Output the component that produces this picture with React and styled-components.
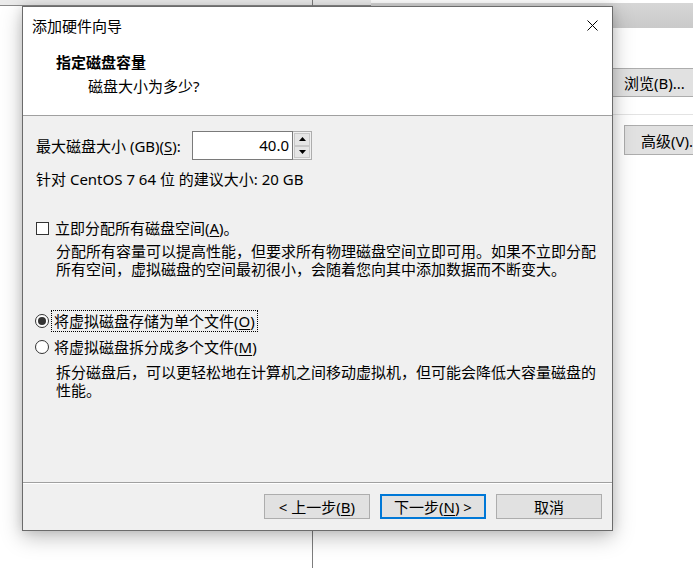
import React from 'react';
import styled, {createGlobalStyle} from 'styled-components';

const GlobalStyle = createGlobalStyle`
    html, body {
        margin: 0;
        padding: 0;
        background: #fff;
    }
    body {
        font-family: "Noto Sans", "Noto Sans CJK SC", sans-serif;
        font-size: 15px;
        color: #000;
    }
`;

// the window that sits behind the wizard
const Desktop = styled.div`
    position: relative;
    width: 693px;
    height: 568px;
    overflow: hidden;
    background: #fff;
`;

const BackWindow = styled.div`
    display: grid;
    grid-template-columns: 312px 1px 1fr;
    height: 100%;
`;

const Pane = styled.div`
    display: flex;
    flex-direction: column;
`;

const TopStrip = styled.div`
    height: 5px;
    width: ${props => props.width || 'auto'};
    flex-shrink: 0;
    background: #ebebeb;
    border-bottom: 1px solid #8a8a8a;
`;

const Divider = styled.div`
    background: #7d7d7d;
`;

const TopRow = styled.div`
    display: flex;
    height: 28px;
`;

const GrayBar = styled.div`
    flex: 1;
    margin-top: 3px;
    background: linear-gradient(#d6d6d6, #cacaca);
`;

const BackButton = styled.div`
    box-sizing: border-box;
    margin-top: ${props => props.top}px;
    margin-left: ${props => props.left}px;
    height: ${props => props.h}px;
    width: 120px;
    padding-left: ${props => props.pad}px;
    display: flex;
    align-items: center;
    background: #e1e1e1;
    border: 1px solid #adadad;
    white-space: nowrap;
`;

const HLine = styled.div`
    margin-top: 17px;
    height: 1px;
    background: #e3e3e3;
`;

// wizard dialog floating over the window
const Dialog = styled.div`
    position: absolute;
    left: 22px;
    top: 6px;
    width: 591px;
    height: 525px;
    box-sizing: border-box;
    border: 1px solid #6b6b6b;
    background: #f0f0f0;
    display: flex;
    flex-direction: column;
    box-shadow: 0 6px 20px rgba(0, 0, 0, 0.26), 0 0 10px rgba(0, 0, 0, 0.1);
`;

const TitleBar = styled.div`
    height: 37px;
    flex-shrink: 0;
    display: flex;
    align-items: center;
    justify-content: space-between;
    background: #fff;
    padding-left: 9px;
`;

const CloseButton = styled.div`
    width: 40px;
    height: 37px;
    display: flex;
    align-items: center;
    justify-content: center;
`;

const Header = styled.div`
    height: 72px;
    flex-shrink: 0;
    box-sizing: border-box;
    background: #fff;
    padding: 8px 0 0 33px;
    border-bottom: 1px solid #a0a0a0;
`;

const HeaderTitle = styled.div`
    font-weight: 700;
    line-height: 20px;
`;

const HeaderSub = styled.div`
    margin: 4px 0 0 32px;
    line-height: 20px;
`;

const Body = styled.div`
    flex: 1;
    padding: 15px 0 0 13px;
`;

const Row = styled.div`
    display: flex;
    align-items: center;
    height: ${props => props.h || 20}px;
    margin-top: ${props => props.top || 0}px;
    white-space: nowrap;
`;

const FieldLabel = styled.div`
    width: 156px;
`;

const NumberBox = styled.div`
    box-sizing: border-box;
    width: 101px;
    height: 29px;
    border: 1px solid #7a7a7a;
    background: #fff;
    text-align: right;
    padding-right: 3px;
    line-height: 27px;
`;

const Spinner = styled.div`
    box-sizing: border-box;
    width: 19px;
    height: 29px;
    display: flex;
    flex-direction: column;
    border: 1px solid #adadad;
    border-left: none;
    background: #f0f0f0;
`;

const SpinButton = styled.div`
    flex: 1;
    display: flex;
    align-items: center;
    justify-content: center;
    background: #e5e5e5;
    border: 1px solid #c8c8c8;
    margin: ${props => props.up ? '1px 1px 0 1px' : '0 1px 1px 1px'};
`;

const Text = styled.div`
    margin-top: ${props => props.top || 0}px;
    line-height: 18px;
`;

const CheckBox = styled.div`
    box-sizing: border-box;
    width: 13px;
    height: 13px;
    border: 1px solid #333;
    background: #fff;
    margin-right: 3px;
`;

const Radio = styled.div`
    box-sizing: border-box;
    width: 14px;
    height: 14px;
    margin-left: -1px;
    border: 1px solid #333;
    border-radius: 50%;
    background: #fff;
    display: flex;
    align-items: center;
    justify-content: center;
    margin-right: 2px;

    &::after {
        content: '';
        width: 8px;
        height: 8px;
        border-radius: 50%;
        background: ${props => props.checked ? '#333' : 'transparent'};
    }
`;

const OptionLabel = styled.span`
    line-height: 20px;
    padding: 0 2px;
    margin-left: ${props => props.gap || 0}px;
    border: 1px dotted ${props => props.focused ? '#000' : 'transparent'};
`;

const Key = styled.span`
    text-decoration: underline;
    text-underline-offset: 2px;
`;

const Desc = styled.div`
    width: 545px;
    margin: ${props => props.top}px 0 0 20px;
    line-height: 18px;
`;

const Footer = styled.div`
    height: 47px;
    flex-shrink: 0;
    display: flex;
    align-items: center;
    justify-content: flex-end;
    gap: 10px;
    padding-right: 10px;
    border-top: 1px solid #a0a0a0;
    box-shadow: inset 0 1px #fff;
`;

const Button = styled.div`
    box-sizing: border-box;
    width: 106px;
    height: 25px;
    display: flex;
    align-items: center;
    justify-content: center;
    background: #e1e1e1;
    border: ${props => props.primary ? '2px solid #0078d7' : '1px solid #adadad'};
    white-space: nowrap;
`;

const Arrow = ({up}) => (
    <svg width="7" height="4" viewBox="0 0 7 4">
        <polygon points={up ? '0,4 7,4 3.5,0' : '0,0 7,0 3.5,4'} fill="#000"/>
    </svg>
);

const App = () => {
    return (
        <Desktop>
            <GlobalStyle/>
            <BackWindow>
                <Pane>
                    <TopStrip/>
                </Pane>
                <Divider/>
                <Pane>
                    <TopRow>
                        <TopStrip width="58px"/>
                        <GrayBar/>
                    </TopRow>
                    <BackButton top={40} left={287} h={29} pad={23}>浏览(B)...</BackButton>
                    <HLine/>
                    <BackButton top={10} left={311} h={30} pad={16}>高级(V)...</BackButton>
                </Pane>
            </BackWindow>

            <Dialog>
                <TitleBar>
                    <span>添加硬件向导</span>
                    <CloseButton>
                        <svg width="11" height="11" viewBox="0 0 11 11">
                            <path d="M0.5 0.5 L10.5 10.5 M10.5 0.5 L0.5 10.5" stroke="#000" strokeWidth="1"/>
                        </svg>
                    </CloseButton>
                </TitleBar>
                <Header>
                    <HeaderTitle>指定磁盘容量</HeaderTitle>
                    <HeaderSub>磁盘大小为多少?</HeaderSub>
                </Header>
                <Body>
                    <Row h={29}>
                        <FieldLabel>最大磁盘大小 (GB)(<Key>S</Key>):</FieldLabel>
                        <NumberBox>40.0</NumberBox>
                        <Spinner>
                            <SpinButton up><Arrow up/></SpinButton>
                            <SpinButton><Arrow/></SpinButton>
                        </Spinner>
                    </Row>
                    <Text top={10}>针对 CentOS 7 64 位 的建议大小: 20 GB</Text>

                    <Row top={30}>
                        <CheckBox/>
                        <OptionLabel>立即分配所有磁盘空间(<Key>A</Key>)。</OptionLabel>
                    </Row>
                    <Desc top={4}>
                        分配所有容量可以提高性能，但要求所有物理磁盘空间立即可用。如果不立即分配所有空间，虚拟磁盘的空间最初很小，会随着您向其中添加数据而不断变大。
                    </Desc>

                    <Row top={33}>
                        <Radio checked/>
                        <OptionLabel focused>将虚拟磁盘存储为单个文件(<Key>O</Key>)</OptionLabel>
                    </Row>
                    <Row top={6}>
                        <Radio/>
                        <OptionLabel>将虚拟磁盘拆分成多个文件(<Key>M</Key>)</OptionLabel>
                    </Row>
                    <Desc top={6}>
                        拆分磁盘后，可以更轻松地在计算机之间移动虚拟机，但可能会降低大容量磁盘的性能。
                    </Desc>
                </Body>
                <Footer>
                    <Button>&lt; 上一步(<Key>B</Key>)</Button>
                    <Button primary>下一步(<Key>N</Key>) &gt;</Button>
                    <Button>取消</Button>
                </Footer>
            </Dialog>
        </Desktop>
    );
};

export default App;
